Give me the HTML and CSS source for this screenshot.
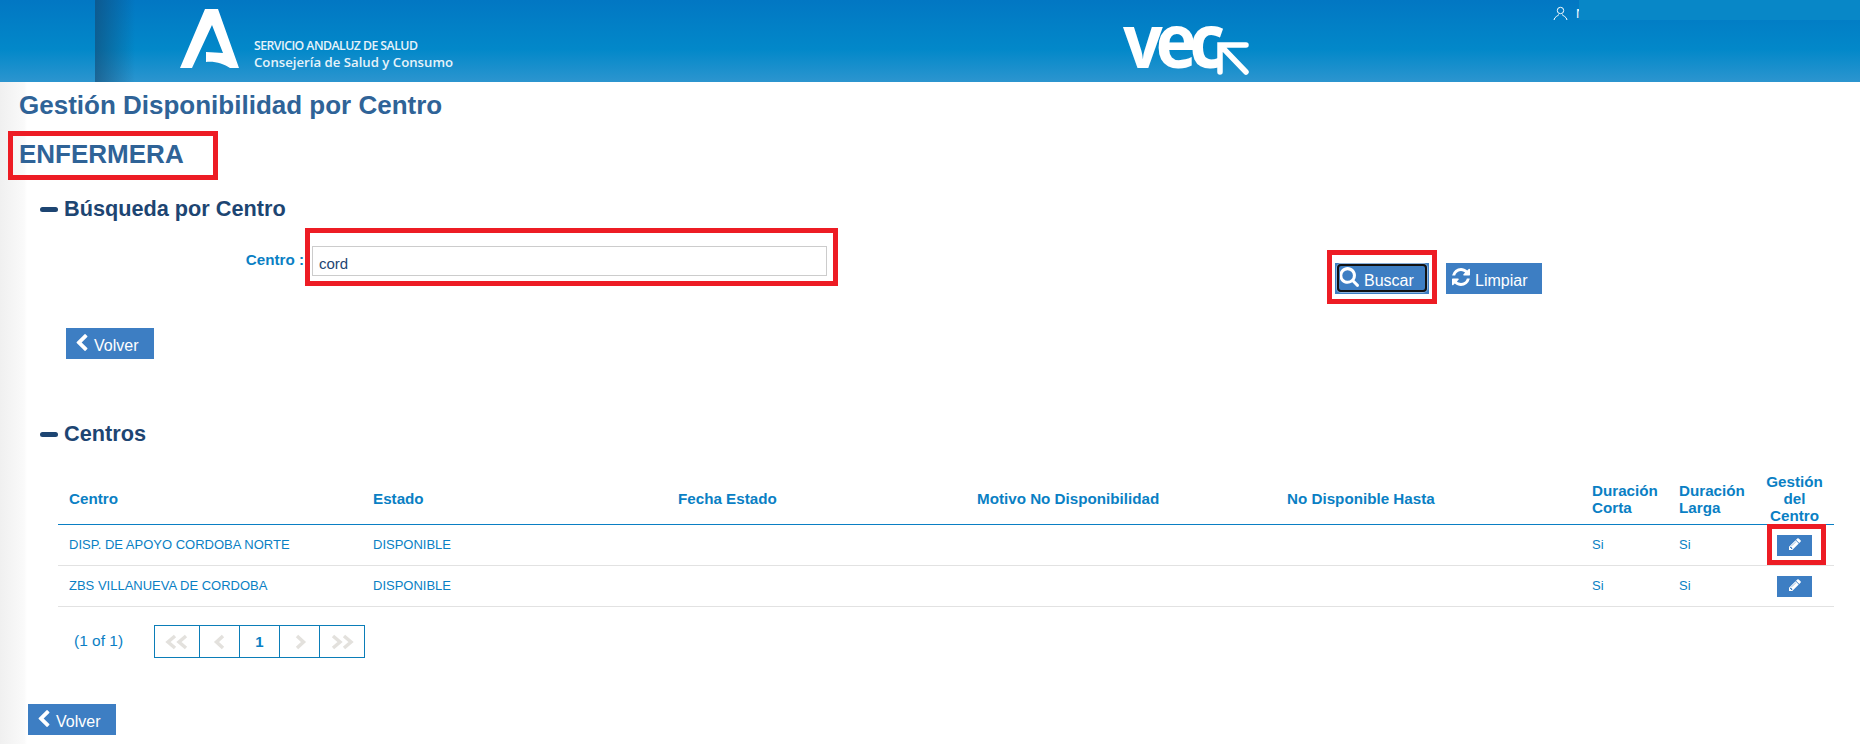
FILE: index.html
```html
<!DOCTYPE html>
<html lang="es">

<head>
    <meta charset="UTF-8">
    <title>Gestión Disponibilidad por Centro</title>
    <link rel="stylesheet" href="styles.css">
</head>

<body>
    <header class="header">
        <div class="header-shade"></div>
        <div class="brand">
            <svg class="brand-mark" viewBox="0 0 59 59" width="59" height="59">
                <path d="M25 0H38L59 59H50C44 55 35 52 26 53V43C32 43 38 44 43 44L32 16L12 59H0Z" fill="#fff" />
            </svg>
            <div class="brand-text">
                <span class="brand-line">SERVICIO ANDALUZ DE SALUD</span>
                <span class="brand-line brand-strong">Consejería de Salud y Consumo</span>
            </div>
        </div>
        <div class="vec">
            <span class="vec-text">vec</span>
            <svg class="vec-arrow" viewBox="0 0 32 33" width="32" height="33">
                <path d="M3 30V3H29M4 4L29 30" fill="none" stroke="#fff" stroke-width="5.5" stroke-linecap="round" />
            </svg>
        </div>
        <div class="user">
            <svg viewBox="0 0 15 14" width="15" height="14">
                <circle cx="7.5" cy="4.5" r="3.2" fill="none" stroke="#fff" />
                <path d="M1 14C1.5 10.5 5 10 6 8.5M14 14C13.5 10.5 10 10 9 8.5" fill="none" stroke="#fff" />
            </svg>
            <span class="user-name">N</span>
        </div>
        <div class="user-mask"></div>
    </header>

    <main class="page">
        <h1 class="title">Gestión Disponibilidad por Centro</h1>
        <h2 class="subtitle">ENFERMERA</h2>

        <section class="panel">
            <h3 class="panel-title"><span class="minus"></span>Búsqueda por Centro</h3>
            <div class="search-row">
                <label class="search-label">Centro :</label>
                <input class="search-input" type="text" value="cord">
                <div class="search-actions">
                    <button class="btn btn-focus">
                        <svg class="btn-icon" viewBox="128 128 1600 1664" width="19" height="20">
                            <path d="M1216 832q0-185-131.5-316.5t-316.5-131.5-316.5 131.5-131.5 316.5 131.5 316.5 316.5 131.5 316.5-131.5 131.5-316.5zm512 832q0 52-38 90t-90 38q-54 0-90-38l-343-342q-179 124-399 124-143 0-273.500-55.5t-225-150-150-225-55.5-273.5 55.5-273.5 150-225 225-150 273.5-55.5 273.5 55.5 225 150 150 225 55.5 273.5q0 220-124 399l343 343q37 37 37 90z" fill="#fff" />
                        </svg>
                        Buscar
                    </button>
                    <button class="btn btn-clear">
                        <svg class="btn-icon" viewBox="128 128 1536 1536" width="18" height="18">
                            <path d="M1639 1056q0 5-1 7-64 268-268 434.5t-478 166.5q-146 0-282.5-55t-243.5-157l-129 129q-19 19-45 19t-45-19-19-45v-448q0-26 19-45t45-19h448q26 0 45 19t19 45-19 45l-137 137q71 66 161 102t187 36q134 0 250-65t186-179q11-17 53-117 8-23 30-23h192q13 0 22.5 9.5t9.5 22.5zm25-800v448q0 26-19 45t-45 19h-448q-26 0-45-19t-19-45 19-45l138-138q-148-137-349-137-134 0-250 65t-186 179q-11 17-53 117-8 23-30 23h-199q-13 0-22.5-9.5t-9.5-22.5v-7q65-268 270-434.5t480-166.5q146 0 284 55.5t245 156.5l130-129q19-19 45-19t45 19 19 45z" fill="#fff" />
                        </svg>
                        Limpiar
                    </button>
                </div>
            </div>
            <button class="btn btn-back">
                <svg class="btn-icon" viewBox="154 26 1036 1612" width="12" height="17">
                    <path d="M1171 301l-531 531 531 531q19 19 19 45t-19 45l-166 166q-19 19-45 19t-45-19l-742-742q-19-19-19-45t19-45l742-742q19-19 45-19t45 19l166 166q19 19 19 45t-19 45z" fill="#fff" />
                </svg>
                Volver
            </button>
        </section>

        <section class="panel panel-list">
            <h3 class="panel-title"><span class="minus"></span>Centros</h3>
            <table class="grid">
                <thead>
                    <tr>
                        <th>Centro</th>
                        <th>Estado</th>
                        <th>Fecha Estado</th>
                        <th>Motivo No Disponibilidad</th>
                        <th>No Disponible Hasta</th>
                        <th>Duración Corta</th>
                        <th>Duración Larga</th>
                        <th class="center">Gestión del Centro</th>
                    </tr>
                </thead>
                <tbody>
                    <tr>
                        <td>DISP. DE APOYO CORDOBA NORTE</td>
                        <td>DISPONIBLE</td>
                        <td></td>
                        <td></td>
                        <td></td>
                        <td>Si</td>
                        <td>Si</td>
                        <td class="center"><button class="edit"><svg viewBox="0 0 1792 1792" width="14" height="14"><path d="M491 1536l91-91-235-235-91 91v107h128v128h107zm523-928q0-22-22-22-10 0-17 7l-542 542q-7 7-7 17 0 22 22 22 10 0 17-7l542-542q7-7 7-17zm-54-192l416 416-832 832h-416v-416zm683 96q0 53-37 90l-166 166-416-416 166-165q36-38 90-38 53 0 91 38l235 234q37 39 37 91z" fill="#fff" /></svg></button></td>
                    </tr>
                    <tr>
                        <td>ZBS VILLANUEVA DE CORDOBA</td>
                        <td>DISPONIBLE</td>
                        <td></td>
                        <td></td>
                        <td></td>
                        <td>Si</td>
                        <td>Si</td>
                        <td class="center"><button class="edit"><svg viewBox="0 0 1792 1792" width="14" height="14"><path d="M491 1536l91-91-235-235-91 91v107h128v128h107zm523-928q0-22-22-22-10 0-17 7l-542 542q-7 7-7 17 0 22 22 22 10 0 17-7l542-542q7-7 7-17zm-54-192l416 416-832 832h-416v-416zm683 96q0 53-37 90l-166 166-416-416 166-165q36-38 90-38 53 0 91 38l235 234q37 39 37 91z" fill="#fff" /></svg></button></td>
                    </tr>
                </tbody>
            </table>
            <div class="pager">
                <span class="pager-count">(1 of 1)</span>
                <div class="pager-links">
                    <span class="pager-cell pager-wide"><svg viewBox="0 0 26 16" width="26" height="16"><path d="M11 2L4 8L11 14M22 2L15 8L22 14" fill="none" stroke="#e3e1dd" stroke-width="3.5" /></svg></span>
                    <span class="pager-cell"><svg viewBox="0 0 14 16" width="14" height="16"><path d="M10 2L3.5 8L10 14" fill="none" stroke="#e3e1dd" stroke-width="3.5" /></svg></span>
                    <span class="pager-cell pager-page">1</span>
                    <span class="pager-cell"><svg viewBox="0 0 14 16" width="14" height="16"><path d="M4 2L10.5 8L4 14" fill="none" stroke="#e3e1dd" stroke-width="3.5" /></svg></span>
                    <span class="pager-cell pager-wide"><svg viewBox="0 0 26 16" width="26" height="16"><path d="M4 2L11 8L4 14M15 2L22 8L15 14" fill="none" stroke="#e3e1dd" stroke-width="3.5" /></svg></span>
                </div>
            </div>
        </section>

        <button class="btn btn-back-bottom">
            <svg class="btn-icon" viewBox="154 26 1036 1612" width="12" height="17">
                <path d="M1171 301l-531 531 531 531q19 19 19 45t-19 45l-166 166q-19 19-45 19t-45-19l-742-742q-19-19-19-45t19-45l742-742q19-19 45-19t45 19l166 166q19 19 19 45t-19 45z" fill="#fff" />
            </svg>
            Volver
        </button>
    </main>

    <div class="mark mark-role"></div>
    <div class="mark mark-input"></div>
    <div class="mark mark-search"></div>
    <div class="mark mark-edit"></div>
</body>

</html>
```

FILE: styles.css
```css
body {
    margin: 0;
    height: 744px;
    overflow: hidden;
    font-family: "Liberation Sans", Arial, sans-serif;
    background: linear-gradient(to right, #f0f0f0 0, #fafafa 24px, #fff 27px);
}

/* header */

.header {
    position: relative;
    height: 82px;
    background: linear-gradient(to bottom, #0277c3 0, #0288c9 60%, #2c95cf 100%);
    overflow: hidden;
}

.header-shade {
    position: absolute;
    left: 95px;
    top: 0;
    width: 40px;
    height: 82px;
    background: linear-gradient(to right, rgba(20, 70, 110, 0.6), rgba(20, 70, 110, 0));
}

.brand {
    position: absolute;
    left: 180px;
    top: 9px;
    display: flex;
    align-items: flex-end;
    gap: 15px;
}

.brand-text {
    display: flex;
    flex-direction: column;
    color: #e6f3fa;
    font-family: "Open Sans", sans-serif;
    font-size: 12.3px;
    font-weight: 600;
    line-height: 17px;
    margin-bottom: -3px;
}

.brand-line {
    letter-spacing: -0.55px;
}

.brand-strong {
    font-size: 13.2px;
    letter-spacing: 0;
}

.vec {
    position: absolute;
    left: 1123px;
    top: 0;
    width: 125px;
    height: 80px;
}

.vec-text {
    display: inline-block;
    color: #fff;
    font-family: "Open Sans", sans-serif;
    font-size: 76px;
    font-weight: 700;
    line-height: 78px;
    letter-spacing: -8px;
    transform: scaleX(0.92);
    transform-origin: left;
}

.vec-arrow {
    position: absolute;
    left: 94px;
    top: 42px;
}

.user {
    position: absolute;
    left: 1553px;
    top: 6px;
    display: flex;
    gap: 8px;
    color: #fff;
    font-size: 13px;
}

.user-mask {
    position: absolute;
    left: 1579px;
    top: 0;
    right: 0;
    height: 20px;
    background: #0887c7;
}

/* page */

.title {
    margin: 0;
    padding: 9px 0 0 19px;
    font-size: 26px;
    line-height: 28px;
    color: #2f6397;
}

.subtitle {
    margin: 0;
    padding: 21px 0 0 19px;
    font-size: 26px;
    line-height: 28px;
    color: #2f6397;
}

.panel {
    padding: 28px 0 0 40px;
}

.panel-title {
    display: flex;
    align-items: center;
    margin: 0;
    font-size: 21.7px;
    line-height: 26px;
    color: #1d4572;
}

.minus {
    width: 18px;
    height: 5px;
    margin-right: 6px;
    border-radius: 3px;
    background: #1d4572;
}

.search-row {
    display: flex;
    align-items: flex-start;
    margin-top: 24px;
}

.search-label {
    width: 264px;
    padding-top: 5px;
    text-align: right;
    font-size: 15.2px;
    font-weight: bold;
    color: #0a7fc4;
}

.search-input {
    box-sizing: border-box;
    width: 515px;
    height: 30px;
    margin: 0 0 0 8px;
    padding: 4px 6px 0;
    border: 1px solid #ccc;
    font-family: inherit;
    font-size: 15px;
    color: #1d4572;
    outline: none;
}

.search-actions {
    display: flex;
    gap: 17px;
    margin: 17px 0 0 508px;
}

.btn {
    display: flex;
    align-items: center;
    gap: 6px;
    box-sizing: border-box;
    width: 88px;
    height: 31px;
    padding: 4px 0 0 10px;
    border: none;
    font-family: inherit;
    font-size: 16px;
    color: #fff;
    background: #3d7ec3;
}

.btn-icon {
    margin-top: -7px;
}

.btn-focus {
    position: relative;
    width: 94px;
    padding-left: 5px;
    gap: 5px;
}

.btn-focus::after {
    content: "";
    position: absolute;
    inset: 1px 2px 2px;
    border: 2px solid #111;
    border-radius: 4px;
    box-shadow: 0 0 0 1px rgba(255, 255, 255, 0.4);
}

.btn-clear {
    width: 96px;
    padding-left: 6px;
    gap: 5px;
}

.btn-back {
    margin: 34px 0 0 26px;
}

.btn-back-bottom {
    margin: 46px 0 0 28px;
}

.panel-list {
    padding-top: 62px;
}

/* table */

.grid {
    width: 1776px;
    margin: 26px 0 0 18px;
    border-collapse: collapse;
    table-layout: fixed;
    font-size: 13px;
    color: #0a7fc4;
}

.grid th {
    height: 50px;
    padding: 0 11px;
    text-align: left;
    font-size: 15.2px;
    line-height: 17px;
    border-bottom: 1px solid #0a7fc4;
    vertical-align: middle;
}

.grid th:nth-child(1) { width: 282px; }
.grid th:nth-child(2) { width: 283px; }
.grid th:nth-child(3) { width: 277px; }
.grid th:nth-child(4) { width: 288px; }
.grid th:nth-child(5) { width: 283px; }
.grid th:nth-child(6) { width: 65px; }
.grid th:nth-child(7) { width: 65px; }

.grid td {
    height: 41px;
    padding: 0 11px 2px;
    box-sizing: border-box;
    border-bottom: 1px solid #e2e2e2;
}

.grid .center {
    text-align: center;
    padding-bottom: 0;
}

.edit {
    width: 35px;
    height: 21px;
    padding: 0;
    border: none;
    vertical-align: middle;
    background: #3d7ec3;
}

.pager {
    display: flex;
    align-items: center;
    margin: 18px 0 0 34px;
}

.pager-count {
    width: 80px;
    padding-bottom: 1px;
    font-size: 15.5px;
    color: #0a7fc4;
}

.pager-links {
    display: flex;
    height: 33px;
    border: 1px solid #0b7db8;
    box-sizing: border-box;
}

.pager-cell {
    display: flex;
    align-items: center;
    justify-content: center;
    width: 39px;
    border-left: 1px solid #0b7db8;
    font-size: 15px;
    font-weight: bold;
    color: #0a7fc4;
}

.pager-cell:first-child {
    border-left: none;
}

.pager-wide {
    width: 44px;
}

/* red annotations drawn on top of the capture */

.mark {
    position: absolute;
    box-sizing: border-box;
    border: 5px solid #ed1c24;
}

.mark-role {
    left: 8px;
    top: 131px;
    width: 210px;
    height: 49px;
}

.mark-input {
    left: 305px;
    top: 228px;
    width: 533px;
    height: 58px;
}

.mark-search {
    left: 1327px;
    top: 250px;
    width: 110px;
    height: 54px;
}

.mark-edit {
    left: 1767px;
    top: 524px;
    width: 59px;
    height: 41px;
}
```
